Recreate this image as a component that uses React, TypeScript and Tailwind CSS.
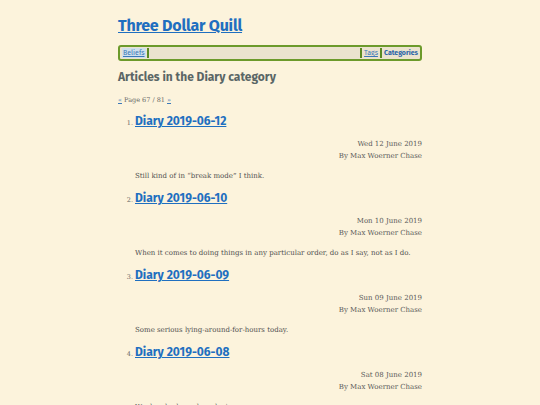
import React from "react";

const items = [
  { t: "Diary 2019-06-12", d: "Wed 12 June 2019", s: "Still kind of in \u201cbreak mode\u201d I think." },
  { t: "Diary 2019-06-10", d: "Mon 10 June 2019", s: "When it comes to doing things in any particular order, do as I say, not as I do." },
  { t: "Diary 2019-06-09", d: "Sun 09 June 2019", s: "Some serious lying-around-for-hours today." },
  { t: "Diary 2019-06-08", d: "Sat 08 June 2019", s: "Weekend, please be relaxing." },
];

const sans = "font-['Fira_Sans','Open_Sans','Noto_Sans',sans-serif]";
const serif = "font-['DejaVu_Serif','Liberation_Serif',serif]";

export default function App() {
  return (
    <div className="w-[540px] h-[405px] overflow-hidden bg-[#fcf3dc]">
      <div className="w-[304px] ml-[118px] pt-[15px]">
        <a className={`${sans} block text-[16px] leading-[22px] font-bold text-[#1f6fc0] underline tracking-[-0.2px]`}>
          Three Dollar Quill
        </a>
        <div className={`${sans} mt-[8px] h-[16px] border-2 border-[#6c9a2b] rounded-[3px] bg-[#ebe3ce] flex items-center text-[7px] px-[2px]`}>
          <a className="bg-[#cfe0ec] text-[#3b78b8] underline px-[1px] leading-[10px]">Beliefs</a>
          <span className="w-[2px] h-[10px] bg-[#5b8a22] ml-[1px]" />
          <span className="flex-1" />
          <span className="w-[2px] h-[10px] bg-[#5b8a22] mr-[2px]" />
          <a className="text-[#3b78b8] underline leading-[10px]">Tags</a>
          <span className="w-[2px] h-[10px] bg-[#5b8a22] mx-[2px]" />
          <a className="text-[#2a64a8] font-bold leading-[10px]">Categories</a>
        </div>
        <h1 className={`${sans} mt-[7px] text-[12px] leading-[18px] font-bold text-[#5a6666]`}>
          Articles in the Diary category
        </h1>
        <div className={`${serif} mt-[9px] text-[6.5px] leading-[10px] text-[#666]`}>
          <a className="text-[#3b78b8] underline">«</a> Page 67 / 81 <a className="text-[#3b78b8] underline">»</a>
        </div>
        <ol className="mt-[7px]">
          {items.map((it, i) => (
            <li key={i} className="h-[77px]">
              <div className="flex items-baseline">
                <span className={`${serif} w-[17px] text-right pr-[2px] text-[6.5px] text-[#666]`}>{i + 1}.</span>
                <a className={`${sans} text-[12px] leading-[18px] font-bold text-[#1f6fc0] underline`}>{it.t}</a>
              </div>
              <div className={`${serif} mt-[8px] text-right text-[7px] leading-[12px] text-[#5a5a5a]`}>
                <div>{it.d}</div>
                <div>By Max Woerner Chase</div>
              </div>
              <p className={`${serif} mt-[8px] ml-[17px] text-[7px] leading-[12px] text-[#505050]`}>{it.s}</p>
            </li>
          ))}
        </ol>
      </div>
    </div>
  );
}
